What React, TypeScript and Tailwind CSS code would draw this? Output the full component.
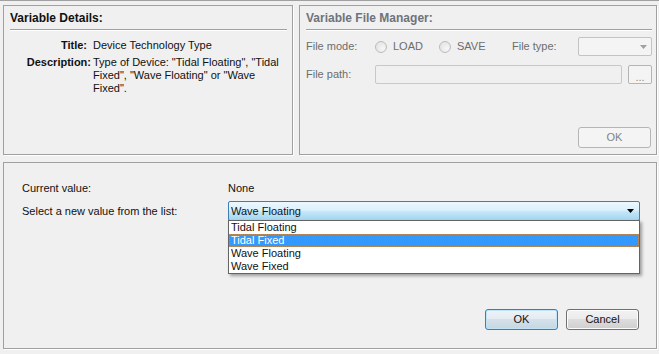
import React from 'react';

const font = { fontFamily: '"Liberation Sans", Arial, sans-serif' };

function Arrow({ color }: { color: string }) {
  return (
    <svg width="7" height="4" viewBox="0 0 7 4">
      <path d="M0 0 H7 L3.5 4 Z" fill={color} />
    </svg>
  );
}

function Radio({ label, width }: { label: string; width: string }) {
  return (
    <div className={`flex items-center ${width}`}>
      <span className="h-[12px] w-[12px] rounded-full border border-[#bcbcbc] bg-[radial-gradient(circle_at_65%_65%,#f6f6f6,#dedede)]" />
      <span className="ml-[6px]">{label}</span>
    </div>
  );
}

export default function App() {
  const options = ['Tidal Floating', 'Tidal Fixed', 'Wave Floating', 'Wave Fixed'];

  return (
    <div
      style={font}
      className="w-[659px] h-[354px] bg-[#f0f0f0] border-t border-[#a0a0a0] pt-[4px] pl-[3px] text-[11px] leading-[13px] text-[#111]"
    >
      {/* top row */}
      <div className="flex gap-[6px]">
        {/* Variable details */}
        <div className="w-[290px] h-[150px] border border-[#a0a0a0] shadow-[1px_1px_0_#fff] pl-[6px] pr-[5px]">
          <div className="h-[24px] pt-[2px] flex items-center border-b border-[#a0a0a0] shadow-[0_1px_0_#fff] text-[12px] font-bold">
            Variable Details:
          </div>
          <div className="mt-[9px] grid grid-cols-[81px_1fr] gap-x-[2px] gap-y-[4px]">
            <div className="text-right font-bold pr-[4px]">Title:</div>
            <div>Device Technology Type</div>
            <div className="text-right font-bold">Description:</div>
            <div>Type of Device: "Tidal Floating", "Tidal Fixed", "Wave Floating" or "Wave Fixed".</div>
          </div>
        </div>

        {/* Variable file manager (disabled) */}
        <div className="w-[358px] h-[150px] border border-[#a0a0a0] shadow-[1px_1px_0_#fff] pl-[6px] pr-[4px] text-[#6d6d6d] flex flex-col">
          <div className="h-[24px] pt-[2px] flex items-center border-b border-[#a0a0a0] shadow-[0_1px_0_#fff] text-[12px] font-bold text-[#6e737c]">
            Variable File Manager:
          </div>
          <div className="mt-[7px] h-[19px] flex items-center">
            <div className="w-[69px]">File mode:</div>
            <Radio label="LOAD" width="w-[64px]" />
            <Radio label="SAVE" width="w-[73px]" />
            <div className="w-[66px]">File type:</div>
            <div className="w-[74px] h-[19px] border border-[#c3c3c3] rounded-[2px] bg-[#f4f4f4] flex items-center justify-end pr-[4px]">
              <Arrow color="#a0a0a0" />
            </div>
          </div>
          <div className="mt-[9px] h-[19px] flex items-center">
            <div className="w-[69px]">File path:</div>
            <div className="w-[247px] h-[19px] border border-[#c8c8c8] rounded-[2px] bg-[#f0f0f0]" />
            <div className="ml-[6px] w-[24px] h-[19px] border border-[#b5b5b5] rounded-[2px] bg-[#f4f4f4] flex items-end justify-center pb-[2px] leading-[8px] text-[#8a8a8a]">
              ...
            </div>
          </div>
          <div className="mt-[43px] self-end mr-[1px] w-[73px] h-[21px] border border-[#b5b5b5] rounded-[3px] bg-[#f4f4f4] flex items-center justify-center text-[#838383]">
            OK
          </div>
        </div>
      </div>

      {/* bottom panel */}
      <div className="mt-[7px] w-[654px] h-[187px] border border-[#a0a0a0] shadow-[1px_1px_0_#fff] pl-[18px] pr-[16px] pt-[19px] pb-[18px] flex flex-col">
        <div className="flex">
          <div className="w-[206px]">Current value:</div>
          <div>None</div>
        </div>
        <div className="mt-[6px] flex items-center">
          <div className="w-[206px]">Select a new value from the list:</div>
          <div className="relative w-[412px] h-[20px]">
            <div className="h-[20px] border border-[#3c7fb1] rounded-[2px] bg-[linear-gradient(#ecf7fd,#dcf1fc_45%,#c2e6f8_55%,#a3d5f1)] flex items-center pl-[2px] pr-[5px]">
              <span className="flex-1">Wave Floating</span>
              <Arrow color="#000" />
            </div>
            <div className="absolute left-0 top-[19px] w-[412px] border border-[#646464] bg-white shadow-[2px_2px_3px_rgba(0,0,0,0.35)]">
              {options.map((o) =>
                o === 'Tidal Fixed' ? (
                  <div
                    key={o}
                    className="h-[13px] pl-[2px] bg-[#3399ff] text-white outline outline-1 outline-dotted outline-[#b98a5c] -outline-offset-1"
                  >
                    {o}
                  </div>
                ) : (
                  <div key={o} className="h-[13px] pl-[2px]">
                    {o}
                  </div>
                )
              )}
            </div>
          </div>
        </div>
        <div className="mt-auto flex justify-end gap-[8px] pr-[1px]">
          <button className="w-[73px] h-[21px] border border-[#3c7fb1] rounded-[3px] bg-[linear-gradient(#eef3f7,#e3ebf1_50%,#d5e1ea_50%,#c7d6e2)] shadow-[inset_0_0_0_1px_#bfe4f7] text-[11px] text-[#111]">
            OK
          </button>
          <button className="w-[73px] h-[21px] border border-[#707070] rounded-[3px] bg-[linear-gradient(#f2f2f2,#ebebeb_50%,#dddddd_50%,#cfcfcf)] shadow-[inset_0_0_0_1px_#fcfcfc] text-[11px] text-[#111]">
            Cancel
          </button>
        </div>
      </div>
    </div>
  );
}
